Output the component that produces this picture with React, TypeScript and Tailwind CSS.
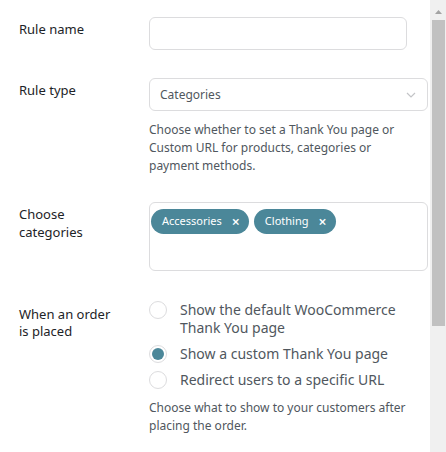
import { useState } from 'react';

const font = { fontFamily: '"Noto Sans", "Open Sans", sans-serif' };

type Option = { id: string; label: string[] };

const OPTIONS: Option[] = [
  { id: 'default', label: ['Show the default WooCommerce', 'Thank You page'] },
  { id: 'custom', label: ['Show a custom Thank You page'] },
  { id: 'redirect', label: ['Redirect users to a specific URL'] },
];

function Chip({ label }: { label: string }) {
  return (
    <span className="flex h-[25px] items-center rounded-full bg-[#4b8799] pl-[11px] pr-[9px] text-[11px] text-white">
      {label}
      <span className="ml-[10px] text-[14px] font-semibold leading-none">×</span>
    </span>
  );
}

function Radio({ checked }: { checked: boolean }) {
  return (
    <span className="flex h-[18px] w-[18px] shrink-0 items-center justify-center rounded-full border border-[#dcdcde] bg-white">
      {checked && <span className="h-[12px] w-[12px] rounded-full bg-[#4b8799]" />}
    </span>
  );
}

export default function App() {
  const [choice, setChoice] = useState('custom');

  return (
    <div className="flex h-[452px] w-[446px] overflow-hidden bg-white" style={font}>
      <div className="w-[430px] pl-[19px] pt-[17px]">
        {/* Rule name */}
        <div className="flex">
          <div className="w-[130px] pt-[2px] text-[13px] leading-[20px] text-[#1d2327]">
            Rule name
          </div>
          <div className="h-[33px] w-[258px] rounded-[6px] border border-[#dcdcde]" />
        </div>

        {/* Rule type */}
        <div className="mt-[28px] flex">
          <div className="w-[130px] pt-[2px] text-[13px] leading-[20px] text-[#1d2327]">
            Rule type
          </div>
          <div className="w-[279px]">
            <div className="flex h-[33px] items-center justify-between rounded-[6px] border border-[#dcdcde] pl-[10px] pr-[11px] text-[12px] text-[#50575e]">
              Categories
              <svg width="10" height="6" viewBox="0 0 10 6" fill="none">
                <path d="M1 1l4 4 4-4" stroke="#c3c4c7" strokeWidth="1.2" />
              </svg>
            </div>
            <p className="mt-[10px] text-[12px] leading-[18px] text-[#50575e]">
              Choose whether to set a Thank You page or
              <br />
              Custom URL for products, categories or
              <br />
              payment methods.
            </p>
          </div>
        </div>

        {/* Categories */}
        <div className="mt-[27px] flex">
          <div className="w-[130px] pt-[3px] text-[13px] leading-[18px] text-[#1d2327]">
            Choose
            <br />
            categories
          </div>
          <div className="flex h-[69px] w-[279px] items-start gap-[5px] rounded-[6px] border border-[#dcdcde] pl-[1px] pt-[6px]">
            <Chip label="Accessories" />
            <Chip label="Clothing" />
          </div>
        </div>

        {/* When an order is placed */}
        <div className="mt-[30px] flex">
          <div className="w-[130px] pt-[5px] text-[13px] leading-[17px] text-[#1d2327]">
            When an order
            <br />
            is placed
          </div>
          <div className="w-[279px]">
            <div className="flex flex-col gap-[8px]">
              {OPTIONS.map((o) => (
                <label
                  key={o.id}
                  className="flex cursor-pointer gap-[13px] text-[14px] leading-[18px] text-[#50575e]"
                  onClick={() => setChoice(o.id)}
                >
                  <Radio checked={choice === o.id} />
                  <span>
                    {o.label.map((l, i) => (
                      <span key={i} className="block">
                        {l}
                      </span>
                    ))}
                  </span>
                </label>
              ))}
            </div>
            <p className="mt-[10px] text-[12px] leading-[18px] text-[#50575e]">
              Choose what to show to your customers after
              <br />
              placing the order.
            </p>
          </div>
        </div>
      </div>

      {/* scrollbar */}
      <div className="flex w-[16px] flex-col items-center bg-[#f0f0f0] pt-[3px]">
        <div className="flex h-[17px] w-full items-center justify-center">
          <svg width="7" height="4" viewBox="0 0 7 4">
            <path d="M0 4L3.5 0 7 4z" fill="#a3a3a3" />
          </svg>
        </div>
        <div className="h-[306px] w-[13px] bg-[#c1c1c1]" />
      </div>
    </div>
  );
}
